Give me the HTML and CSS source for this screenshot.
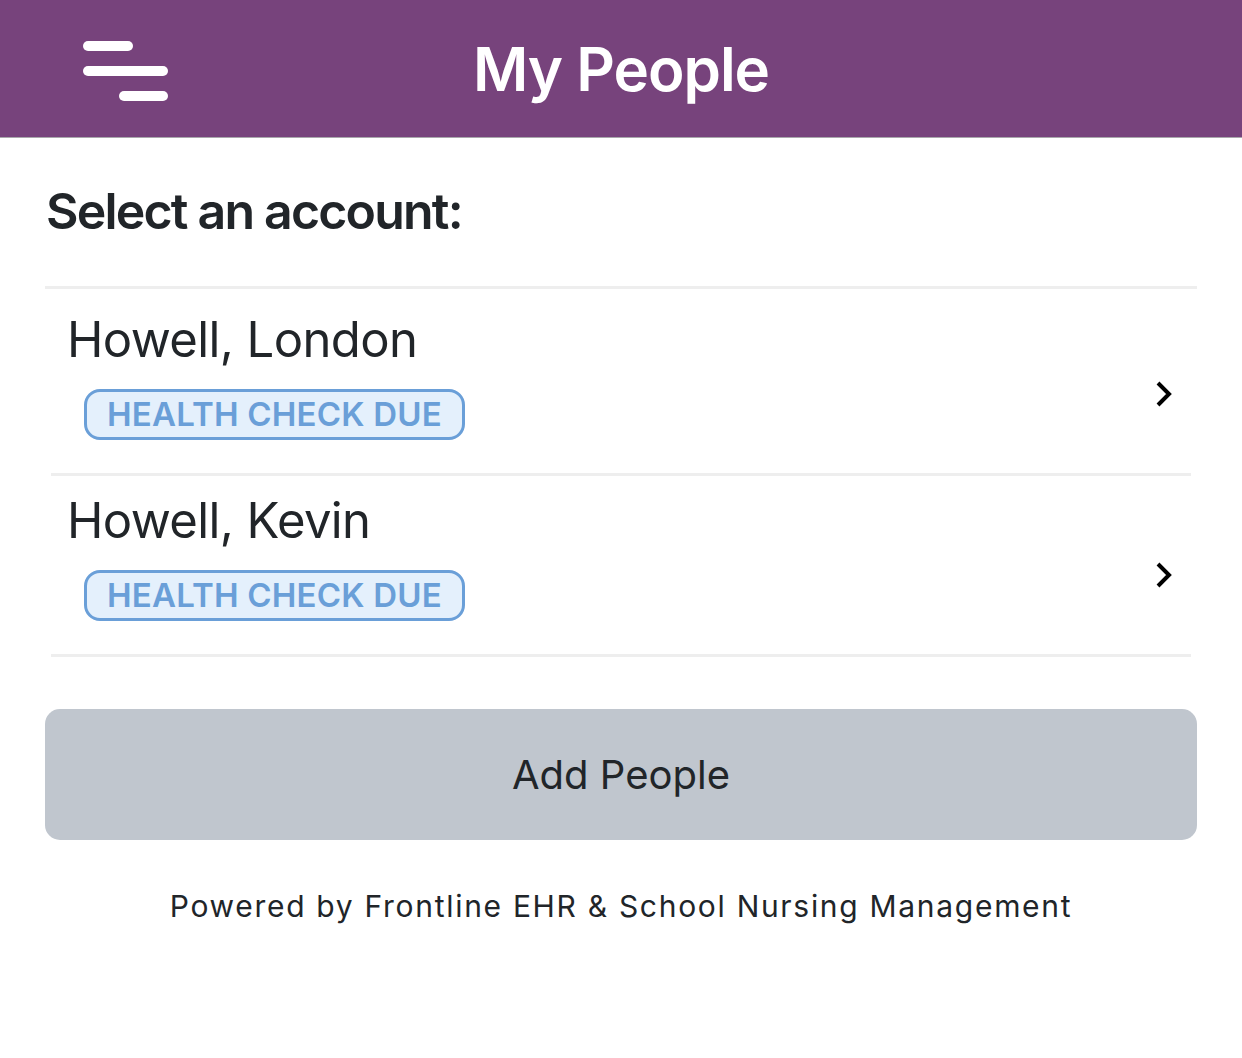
FILE: index.html
```html
<!DOCTYPE html>
<html lang="en">
<head>
<title>My People</title>
<link rel="stylesheet" href="styles.css">
</head>
<body>

<div class="topbar">
  <button type="button" class="menu-button" aria-label="Menu">
    <svg width="86" height="62" viewBox="0 0 86 62">
      <line x1="5" y1="6" x2="45" y2="6"/>
      <line x1="5" y1="31" x2="80" y2="31"/>
      <line x1="41" y1="56" x2="80" y2="56"/>
    </svg>
  </button>
  <div class="topbar-title">My People</div>
  <div></div>
</div>

<div class="page">
  <h2 class="page-heading">Select an account:</h2>

  <div class="people-list">
    <a class="person first" href="#">
      <div class="person-info">
        <div class="person-name">Howell, London</div>
        <span class="status-badge">HEALTH CHECK DUE</span>
      </div>
      <svg class="chevron" width="18" height="28" viewBox="0 0 18 28">
        <polyline points="3,3 14,14 3,25"/>
      </svg>
    </a>
    <a class="person" href="#">
      <div class="person-info">
        <div class="person-name">Howell, Kevin</div>
        <span class="status-badge">HEALTH CHECK DUE</span>
      </div>
      <svg class="chevron" width="18" height="28" viewBox="0 0 18 28">
        <polyline points="3,3 14,14 3,25"/>
      </svg>
    </a>
  </div>

  <button type="button" class="add-button">Add People</button>

  <p class="powered-by">Powered by Frontline EHR &amp; School Nursing Management</p>
</div>

</body>
</html>
```

FILE: styles.css
```css
body {
  margin: 0;
  font-family: Inter, "Noto Sans", sans-serif;
  color: #212529;
  background-color: #ffffff;
}

.topbar {
  display: grid;
  grid-template-columns: 1fr auto 1fr;
  align-items: center;
  height: 137px;
  background-color: #77437c;
  border-bottom: 1px solid #a8a8ab;
}

.menu-button {
  justify-self: start;
  margin: 5px 0 0 83px;
  padding: 0;
  border: none;
  background: none;
  cursor: pointer;
}

.menu-button svg {
  display: block;
  stroke: #ffffff;
  stroke-width: 10;
  stroke-linecap: round;
}

.topbar-title {
  color: #ffffff;
  font-size: 60px;
  font-weight: 600;
  line-height: 76px;
  letter-spacing: -1px;
}

.page {
  padding: 0 45px;
}

.page-heading {
  margin: 42px 0 44px 1px;
  font-size: 50px;
  font-weight: 600;
  line-height: 62px;
  letter-spacing: -1.8px;
}

.people-list {
  border-top: 3px solid #eeeeee;
}

.person {
  display: flex;
  justify-content: space-between;
  margin: 0 6px;
  padding: 15px 18px 33px 16px;
  border-bottom: 3px solid #eeeeee;
  color: inherit;
  text-decoration: none;
}

.person.first {
  padding-top: 21px;
}

.person-name {
  margin-bottom: 19px;
  font-size: 49px;
  line-height: 60px;
  letter-spacing: -0.6px;
}

.status-badge {
  display: inline-block;
  margin-left: 17px;
  padding: 0 20px;
  border: 3px solid #6a9fd8;
  border-radius: 16px;
  background-color: #e4f0fc;
  color: #6a9fd8;
  font-size: 33px;
  font-weight: 600;
  line-height: 45px;
  letter-spacing: 0.2px;
}

.chevron {
  align-self: center;
  margin-top: 38px;
  fill: none;
  stroke: #000000;
  stroke-width: 4;
}

.add-button {
  display: block;
  width: 100%;
  height: 131px;
  margin-top: 52px;
  border: none;
  border-radius: 15px;
  background-color: #c0c6ce;
  color: #212529;
  font-family: inherit;
  font-size: 40px;
  cursor: pointer;
}

.powered-by {
  margin: 48px 0 0;
  text-align: center;
  font-size: 30px;
  line-height: 36px;
  letter-spacing: 1.7px;
}
```
